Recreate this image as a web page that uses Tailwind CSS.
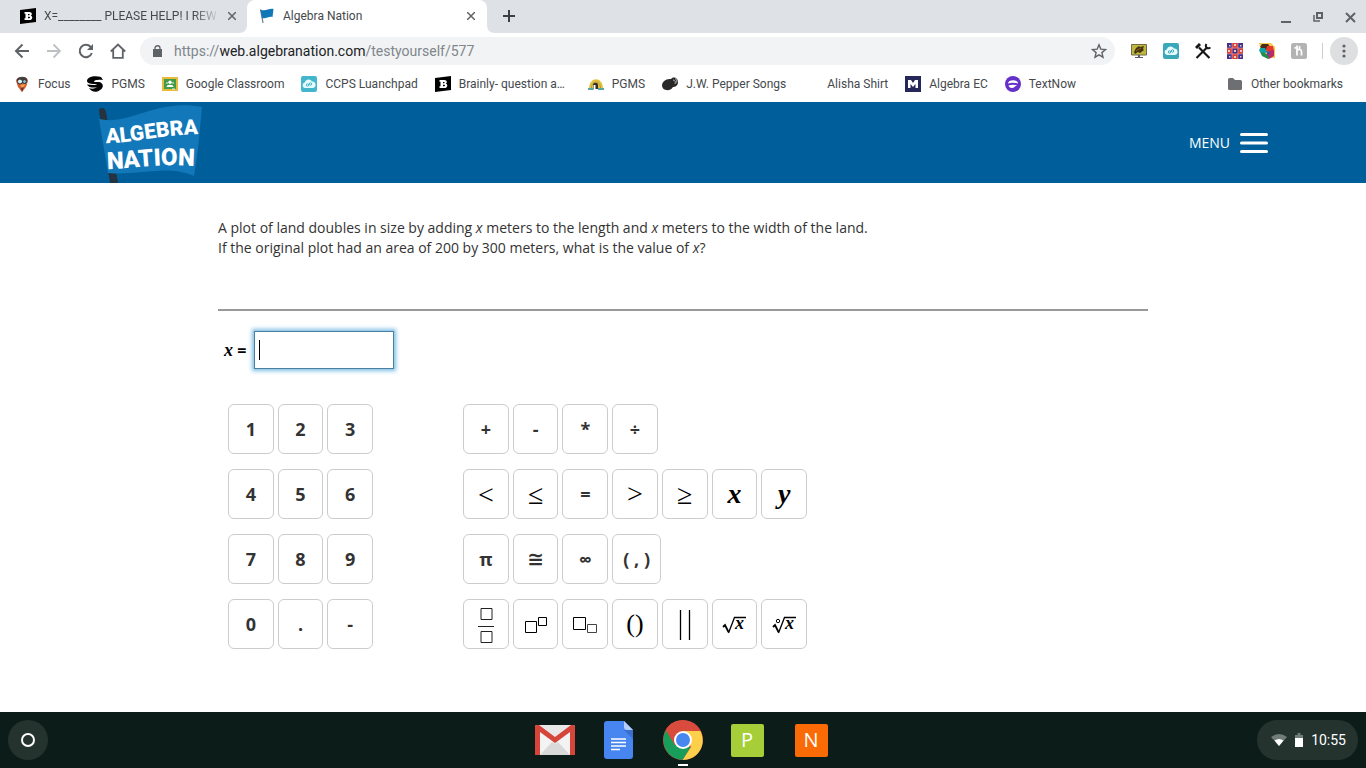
<!doctype html>
<html lang="en">
<head>
  <meta charset="UTF-8">
  <meta name="viewport" content="width=device-width, initial-scale=1.0">
  <title>Algebra Nation</title>
  <script src="https://cdn.jsdelivr.net/npm/@tailwindcss/browser@4"></script>
</head>
<body class="flex min-h-screen flex-col bg-white font-['Roboto',sans-serif] text-xs text-[#45494d]">

  <!-- Tab strip -->
  <div class="flex h-[33px] bg-[#dee1e6]">
    <div class="flex w-60 items-center gap-1 pb-[2px] pl-5">
      <svg class="mr-1 size-4 shrink-0" viewBox="0 0 16 16"><path d="M0 2 16 0v14L0 16z" fill="#000"/><path d="M4.500 4h4.700c3.200 0 3.200 3 1.600 3.700 2.300.6 2 4.300-1.400 4.300H4.500v-1.800h1V5.800h-1zM8 6v1.300h1C10 7.300 10 6 9 6zm0 2.800v1.500h1.200c1.100 0 1.100-1.500 0-1.500z" fill="#fff"/></svg>
      <a href="#" class="min-w-0 flex-1 overflow-hidden whitespace-nowrap mask-r-from-85%">X=________ PLEASE HELP! I REW</a>
      <button aria-label="Close tab" class="flex size-4 items-center justify-center"><svg class="size-2" viewBox="0 0 8 8" stroke="#5f6368" stroke-width="1.500"><path d="m0 0 8 8M8 0 0 8"/></svg></button>
    </div>
    <svg class="-ml-px size-2 self-end" viewBox="0 0 8 8"><path d="M8 0v8H0c5 0 8-3 8-8" fill="#fff"/></svg>
    <div class="flex w-60 items-center gap-2 rounded-t-lg bg-white pr-2 pb-[2px] pl-3">
      <svg class="size-4 shrink-0" viewBox="0 0 16 16"><path d="M1.500 1.500 4 15" stroke="#6a7a86" stroke-width="1.200"/><path d="M1.500 1.500c5 2.500 8-1.500 13-.5l-1 8c-4-1-6 2-10.500 1z" fill="#1277b8"/></svg>
      <a href="#" class="flex-1">Algebra Nation</a>
      <button aria-label="Close tab" class="flex size-4 items-center justify-center"><svg class="size-2" viewBox="0 0 8 8" stroke="#5f6368" stroke-width="1.500"><path d="m0 0 8 8M8 0 0 8"/></svg></button>
    </div>
    <svg class="size-2 self-end" viewBox="0 0 8 8"><path d="M0 0v8h8C3 8 0 5 0 0" fill="#fff"/></svg>
    <button aria-label="New tab" class="flex w-7 items-center justify-center pb-[2px]"><svg class="size-3" viewBox="0 0 12 12" stroke="#3c4043" stroke-width="2"><path d="M6 0v12M0 6h12"/></svg></button>
    <div class="ml-auto flex items-center gap-4 pr-2">
      <button aria-label="Minimize" class="size-4"><svg viewBox="0 0 16 16"><path d="M3 12h10v2H3z" fill="#5f6368"/></svg></button>
      <button aria-label="Restore" class="size-4"><svg viewBox="0 0 16 16" fill="none" stroke="#5f6368" stroke-width="2"><path d="M7 4h5v5H7z"/><path d="M4 6v6h6" stroke-width="1.500"/></svg></button>
      <button aria-label="Close" class="size-4"><svg viewBox="0 0 16 16" stroke="#5f6368" stroke-width="2"><path d="m4 4 9 9M13 4l-9 9"/></svg></button>
    </div>
  </div>

  <!-- Toolbar -->
  <div class="flex h-9 items-center pr-2 pl-[6px]">
    <button aria-label="Back" class="flex w-8 justify-center"><svg class="size-4" viewBox="0 0 16 16" fill="none" stroke="#5f6368" stroke-width="2"><path d="M15 8H2.500M8.500 1.500 2 8l6.500 6.500"/></svg></button>
    <button aria-label="Forward" class="flex w-8 justify-center"><svg class="size-4" viewBox="0 0 16 16" fill="none" stroke="#bdc1c6" stroke-width="1.800"><path d="M1 8h12.500M7.500 1.500 14 8l-6.500 6.500"/></svg></button>
    <button aria-label="Reload" class="flex w-8 justify-center"><svg class="size-4" viewBox="0 0 16 16" fill="none" stroke="#5f6368" stroke-width="2"><path d="M13.800 10A6.200 6.200 0 1 1 12.500 3.700L14 5.300"/><path d="M15 1v6H9z" fill="#5f6368" stroke="none"/></svg></button>
    <button aria-label="Home" class="flex w-8 justify-center"><svg class="size-4" viewBox="0 0 16 16" fill="none" stroke="#5f6368" stroke-width="1.800"><path d="M.8 8.500 8 1.500l7.200 7M3.200 7v7.800h9.600V7"/></svg></button>
    <div class="ml-[6px] flex h-7 flex-1 items-center rounded-full bg-[#f1f3f4] pr-2 pl-[13px]">
      <svg class="mr-3 h-3 w-[9px]" viewBox="0 0 9 12"><path d="M0 4h9v8H0z" fill="#5f6368"/><path d="M2 5V3c0-3 5-3 5 0v2" fill="none" stroke="#5f6368" stroke-width="1.300"/></svg>
      <a href="#" class="flex-1 text-sm text-[#80868b]">https://<span class="text-[#202124]">web.algebranation.com</span>/testyourself/577</a>
      <button aria-label="Bookmark this page"><svg class="size-4" viewBox="0 0 16 16" fill="none" stroke="#5f6368" stroke-width="1.400"><path d="m8 1.800 1.800 4.300 4.700.4-3.600 3.100 1.100 4.600L8 11.800l-4 2.400 1.100-4.600L1.500 6.500l4.700-.4z"/></svg></button>
    </div>
    <div class="flex pl-2">
      <button aria-label="Desktop extension" class="flex w-8 justify-center"><svg class="size-4" viewBox="0 0 16 16"><path d="M.5 1.500h15V12H.5z" fill="#c3b63f" stroke="#6f6c4a"/><path d="m3 9 2-4 3-2 1 1 4-1-1 3 1 1-4 3-2-1-3 2z" fill="#3b3911"/><path d="m5 8 5-3" stroke="#b84c1b"/><path d="M7 12h2v2h3v1H4v-1h3z" fill="#5b5d6b"/></svg></button>
      <button aria-label="Launchpad extension" class="flex w-8 justify-center"><svg class="size-4" viewBox="0 0 16 16"><rect width="16" height="16" rx="2" fill="#39a9b9"/><path d="M4 12a2.800 2.800 0 0 1-.3-5.500A4 4 0 0 1 11 5.500 3.300 3.300 0 0 1 12 12z" fill="#e7fbff"/><circle cx="6.500" cy="9" r="1.200" fill="none" stroke="#39a9b9"/><circle cx="9.500" cy="8" r="1.200" fill="none" stroke="#39a9b9"/></svg></button>
      <button aria-label="Tools extension" class="flex w-8 justify-center"><svg class="size-4" viewBox="0 0 16 16" fill="none" stroke="#181818"><path d="M4 4.500 14.500 15" stroke-width="2.200"/><path d="m1.500 15 10-10" stroke-width="2.200"/><path d="m1 5 4-4" stroke-width="3"/><path d="M11.500 1c-2 3 1 5.500 4 3.500" stroke-width="2"/></svg></button>
      <button aria-label="Pattern extension" class="flex w-8 justify-center"><svg class="size-4" viewBox="0 0 16 16"><path d="M0 0h16v16H0z" fill="#d84338"/><path d="M0 0h5v5H0zM11 0h5v5h-5zM5.500 5.500h5v5h-5zM0 11h5v5H0zM11 11h5v5h-5z" fill="#40318f"/><path d="M2 2h1.500v1.500H2zM7 1h2v2H7zM13 2h1.500v1.500H13zM1 7h2v2H1zM7 7h2v2H7zM13 7h2v2h-2zM2 13h1.500v1.500H2zM7 13h2v2H7zM13 13h1.500v1.500H13z" fill="#e9c9c5"/><path d="M5 0v16M11 0v16M0 5h16M0 11h16" stroke="#d9b4c4" stroke-width=".5"/></svg></button>
      <button aria-label="Paint extension" class="flex w-8 justify-center"><svg class="size-4" viewBox="0 0 16 16"><path d="M0 0h12l4 4v11h-3L3 12z" fill="#f8c94b"/><path d="M3 1h6l3 4-6 3-5-4z" fill="#4a2b1b"/><path d="M1 5h5l2 4-4 2-4-3z" fill="#11a2a8"/><path d="M8 3h6l1 5-4 3-4-4z" fill="#e6372b"/><path d="m10 8 5-1v6l-5 3-4-3z" fill="#b82d68"/><path d="m1 9 5 1 4 4-1 2-6-3z" fill="#218f49"/><path d="m7 8 4 1-2 4z" fill="#2d58bd"/></svg></button>
      <button aria-label="Honey extension" class="flex w-8 justify-center"><svg class="size-4" viewBox="0 0 16 16" fill="none"><rect width="16" height="16" rx="2.500" fill="#b3b3b3"/><path d="M6 2.500v10M6 7.500c1-1.500 4.500-1.500 4.500 1v4M3.500 4.500 6 5.500M8.500 3v3" stroke="#fff" stroke-width="1.700"/></svg></button>
    </div>
    <div class="mx-[7px] h-4 w-px bg-[#c9ccd0]"></div>
    <button aria-label="Browser menu" class="flex size-7 items-center justify-center rounded-full bg-[#dedfe0]"><svg class="size-4" viewBox="0 0 16 16" fill="#5f6368"><circle cx="8" cy="3" r="1.600"/><circle cx="8" cy="8" r="1.600"/><circle cx="8" cy="13" r="1.600"/></svg></button>
  </div>

  <!-- Bookmarks bar -->
  <nav class="flex h-[33px] items-center gap-[17px] pr-[23px] pb-[3px] pl-[14px] whitespace-nowrap">
    <a href="#" class="flex items-center gap-2"><svg class="size-4" viewBox="0 0 16 16"><path d="M2 5c0-5 12-5 12 0l-2 6-4 5-4-5z" fill="#d45b32"/><path d="M3 3c2-3 9-3 10 0v2H3z" fill="#493f3b"/><circle cx="6" cy="5.500" r="2.500" fill="#def1f2" stroke="#283238"/><circle cx="10.500" cy="5.500" r="2" fill="#83bac4" stroke="#283238"/><path d="m6 9 5-1-2 5z" fill="#f4a046"/><path d="m7 12 3-1-2 5z" fill="#5b302c"/></svg>Focus</a>
    <a href="#" class="flex items-center gap-2"><svg class="size-4" viewBox="0 0 16 16"><path d="M14 1C7-1 0 1 0 5c0 2.500 4 3 10 3-1 1.500-6 1-10 .5 1 2 3 3 5 3h8.500c2.500-2.500 1.500-5-1.500-5.500H7C7 4 10 3.500 16 4z" fill="#050505"/><path d="M2 12c2 1 6 1 8-1l4-4c3 2 2 5-1 7-3 3-9 2-11-2" fill="#050505"/></svg>PGMS</a>
    <a href="#" class="flex items-center gap-2"><svg class="size-4" viewBox="0 0 16 16"><path d="M0 1h16v14H0z" fill="#e9ba3c"/><path d="M2 3h12v10H2z" fill="#439a4a"/><circle cx="8" cy="6.300" r="1.700" fill="#fff"/><path d="M4.500 11c0-3 7-3 7 0z" fill="#fff"/><circle cx="5" cy="7" r="1" fill="#b5d9ad"/><circle cx="11" cy="7" r="1" fill="#b5d9ad"/><path d="M10 12.500h3v1h-3z" fill="#eee"/></svg>Google Classroom</a>
    <a href="#" class="flex items-center gap-2"><svg class="size-4" viewBox="0 0 16 16"><rect width="16" height="16" rx="2" fill="#43b6cb"/><path d="M4 12a2.800 2.800 0 0 1-.3-5.500A4 4 0 0 1 11 5.500 3.300 3.300 0 0 1 12 12z" fill="#e7fbff"/><circle cx="6.500" cy="9" r="1.200" fill="none" stroke="#43b6cb"/><circle cx="9.500" cy="8" r="1.200" fill="none" stroke="#43b6cb"/></svg>CCPS Luanchpad</a>
    <a href="#" class="flex items-center gap-2"><svg class="size-4" viewBox="0 0 16 16"><path d="M0 2 16 0v14L0 16z" fill="#000"/><path d="M4.500 4h4.700c3.200 0 3.200 3 1.600 3.700 2.300.6 2 4.300-1.400 4.300H4.500v-1.800h1V5.800h-1zM8 6v1.300h1C10 7.300 10 6 9 6zm0 2.800v1.500h1.200c1.100 0 1.100-1.500 0-1.500z" fill="#fff"/></svg>Brainly- question a…</a>
    <a href="#" class="ml-[6px] flex items-center gap-2"><svg class="size-4" viewBox="0 0 16 16"><path d="M1 13C1 0 15 0 15 13" fill="#e3c13d"/><path d="M3.500 12C3.500 4 12.500 4 12.500 12" fill="none" stroke="#b39b3f"/><path d="M5 13V9c0-3 5-3 5 0v4z" fill="#342e29"/><path d="M5.500 9h2v4h-2z" fill="#fff"/><path d="M0 12h5l1 2H0zM10 12h6v2h-6z" fill="#58a7a7"/></svg>PGMS</a>
    <a href="#" class="flex items-center gap-2"><svg class="size-4" viewBox="0 0 16 16"><path d="M0 9c1-5 5-6 9-6 3-3 7-1 7 3s-3 5-5 5c-3 5-11 4-11-2" fill="#292929"/><path d="M11 4c2 0 3 2 2 4M13 2.500c2 1 2 2 1.500 4" stroke="#d8d8d8" fill="none" stroke-width=".8"/></svg>J.W. Pepper Songs</a>
    <a href="#" class="flex items-center gap-2"><span class="size-4"></span>Alisha Shirt</a>
    <a href="#" class="flex items-center gap-2"><svg class="size-4" viewBox="0 0 16 16"><path d="M0 0h16v16H0z" fill="#252859"/><path d="M3 12V4h3l2 3 2-3h3v8h-2.500V8L8 11 5.500 8v4z" fill="#fff"/></svg>Algebra EC</a>
    <a href="#" class="flex items-center gap-2"><svg class="size-4" viewBox="0 0 16 16"><circle cx="8" cy="8" r="8" fill="#6530c9"/><path d="M3 7.500c0-4.500 10-4.500 10 0-3-1-7-1-10 0" fill="#fff"/><path d="M3.500 9.500c3-1 6-1 9 0-2 0-3 2-5 2.500-2 .5-3.500-1-4-2.500" fill="#fff"/></svg>TextNow</a>
    <a href="#" class="ml-auto flex items-center gap-2"><svg class="size-4" viewBox="0 0 16 16"><path d="M1 3.500Q1 2 2.500 2H6l2 2h5.500Q15 4 15 5.500v7q0 1.500-1.500 1.500h-11Q1 14 1 12.500z" fill="#6d6f72"/></svg>Other bookmarks</a>
  </nav>

  <!-- Site header -->
  <header class="bg-[#005f9b] px-4 font-['Open_Sans',sans-serif]">
    <div class="mx-auto flex h-[81px] max-w-[1170px] items-center justify-between">
      <a href="#" aria-label="Algebra Nation home">
        <svg class="h-[81px] w-[106px]" viewBox="0 0 106 81" font-family="Roboto, sans-serif" font-weight="900" fill="#fff">
          <path d="M1 9Q1 6 4 6t4 4l12 71h-8z" fill="#26323d"/>
          <path d="M1 17C32 24 58-4 104 5c-2 22-4 46-8 69C68 62 42 74 10 71z" fill="#1278b9"/>
          <path id="line-top" d="M8 41C38 41 62 32 110 32" fill="none"/>
          <path id="line-bottom" d="M9 67C38 67 58 60 110 65" fill="none"/>
          <text font-size="21"><textPath href="#line-top">ALGEBRA</textPath></text>
          <text font-size="24"><textPath href="#line-bottom">NATION</textPath></text>
        </svg>
      </a>
      <button class="flex items-center gap-[10px] text-sm text-white">MENU
        <svg class="h-5 w-7" viewBox="0 0 28 20" stroke="#fff" stroke-width="3" stroke-linecap="round"><path d="M1.500 1.500h25M1.500 10h25M1.500 18.500h25"/></svg>
      </button>
    </div>
  </header>

  <!-- Question -->
  <main class="mx-auto w-full max-w-[930px] flex-1 font-['Open_Sans',sans-serif] text-sm text-[#333]">
    <div class="border-b-2 border-[#999] pt-[35px] pb-[51px] leading-5">
      <p>A plot of land doubles in size by adding <i>x</i> meters to the length and <i>x</i> meters to the width of the land.<br>If the original plot had an area of 200 by 300 meters, what is the value of <i>x</i>?</p>
    </div>

    <div class="mt-5 flex items-center gap-2 pl-[6px]">
      <label for="answer" class="text-base font-bold text-black"><i class="font-['Liberation_Serif',serif] text-lg leading-6">x</i> =</label>
      <div class="relative">
        <input id="answer" type="text" class="block h-[38px] w-[140px] border border-[#4a7f9f] px-1 caret-transparent shadow-[0_0_4px_2px_#7fbfe6] outline-none">
        <span class="absolute top-[9px] left-[5px] h-5 w-px bg-black"></span>
      </div>
    </div>

    <div class="mt-[35px] flex gap-[90px] pl-[10px] text-lg font-bold">
      <div class="grid w-[145px] grid-cols-3 gap-x-1 gap-y-[15px]">
        <button class="h-[50px] rounded-md border border-[#ccc]">1</button>
        <button class="h-[50px] rounded-md border border-[#ccc]">2</button>
        <button class="h-[50px] rounded-md border border-[#ccc]">3</button>
        <button class="h-[50px] rounded-md border border-[#ccc]">4</button>
        <button class="h-[50px] rounded-md border border-[#ccc]">5</button>
        <button class="h-[50px] rounded-md border border-[#ccc]">6</button>
        <button class="h-[50px] rounded-md border border-[#ccc]">7</button>
        <button class="h-[50px] rounded-md border border-[#ccc]">8</button>
        <button class="h-[50px] rounded-md border border-[#ccc]">9</button>
        <button class="h-[50px] rounded-md border border-[#ccc]">0</button>
        <button class="h-[50px] rounded-md border border-[#ccc]">.</button>
        <button class="h-[50px] rounded-md border border-[#ccc]">-</button>
      </div>

      <div class="grid w-[344px] grid-cols-7 gap-x-1 gap-y-[15px]">
        <button class="h-[50px] rounded-md border border-[#ccc]">+</button>
        <button class="h-[50px] rounded-md border border-[#ccc]">-</button>
        <button class="h-[50px] rounded-md border border-[#ccc]">*</button>
        <button class="h-[50px] rounded-md border border-[#ccc]">÷</button>

        <button class="col-start-1 h-[50px] rounded-md border border-[#ccc] pt-px font-['Liberation_Serif',serif] text-[28px] font-normal text-black">&lt;</button>
        <button class="h-[50px] rounded-md border border-[#ccc] pt-px font-['Liberation_Serif',serif] text-[28px] font-normal text-black">≤</button>
        <button class="h-[50px] rounded-md border border-[#ccc]">=</button>
        <button class="h-[50px] rounded-md border border-[#ccc] font-['Liberation_Serif',serif] text-[28px] font-normal text-black">&gt;</button>
        <button class="h-[50px] rounded-md border border-[#ccc] pt-px font-['Liberation_Serif',serif] text-[28px] font-normal text-black">≥</button>
        <button class="h-[50px] rounded-md border border-[#ccc] font-['Liberation_Serif',serif] text-[28px] text-black italic">x</button>
        <button class="h-[50px] rounded-md border border-[#ccc] font-['Liberation_Serif',serif] text-[28px] text-black italic">y</button>

        <button class="h-[50px] rounded-md border border-[#ccc]">π</button>
        <button class="h-[50px] rounded-md border border-[#ccc] font-['DejaVu_Sans',sans-serif] text-xl">≅</button>
        <button class="h-[50px] rounded-md border border-[#ccc]">∞</button>
        <button class="h-[50px] w-[49px] rounded-md border border-[#ccc]">( , )</button>

        <button aria-label="Fraction" class="col-start-1 flex h-[50px] items-center justify-center rounded-md border border-[#ccc] pt-[2px]"><svg class="h-9 w-4" viewBox="0 0 16 36" fill="none" stroke="#222"><path d="M3 1.500h11v11H3zM0 19.500h16M3 24.500h11v11H3z"/></svg></button>
        <button aria-label="Exponent" class="flex h-[50px] items-center justify-center rounded-md border border-[#ccc] pt-[2px]"><svg class="h-5 w-6" viewBox="0 0 24 20" fill="none" stroke="#000"><path d="M1.500 6.500h11v11h-11zM14.500 2.500h8v8h-8z"/></svg></button>
        <button aria-label="Subscript" class="flex h-[50px] items-center justify-center rounded-md border border-[#ccc] pt-[2px]"><svg class="h-5 w-6" viewBox="0 0 24 20" fill="none" stroke="#000"><path d="M.5 2.500h12v12H.5z"/><path d="M14.500 9.500h9v8h-9z" stroke="#444"/></svg></button>
        <button class="h-[50px] rounded-md border border-[#ccc] font-['Liberation_Serif',serif] text-[26px] font-normal text-black">()</button>
        <button aria-label="Absolute value" class="flex h-[50px] items-center justify-center rounded-md border border-[#ccc] pt-[2px]"><svg class="h-[30px] w-3" viewBox="0 0 12 30" stroke="#000" stroke-width="1.300"><path d="M1.500 0v30M10.500 0v30"/></svg></button>
        <button aria-label="Square root" class="flex h-[50px] items-center justify-center rounded-md border border-[#ccc] pt-[2px]"><svg class="h-6 w-6" viewBox="0 0 24 24" fill="none" stroke="#000"><path d="m1 14 2-2 3.500 7" stroke-width="1.800"/><path d="m6.500 20 6-15.500H24" stroke-width="1.300"/><text x="13" y="16" font-family="Liberation Serif, serif" font-size="18" font-style="italic" font-weight="bold" fill="#000" stroke="none">x</text></svg></button>
        <button aria-label="Nth root" class="flex h-[50px] items-center justify-center rounded-md border border-[#ccc] pt-[2px]"><svg class="h-6 w-6" viewBox="0 0 24 24" fill="none" stroke="#000"><path d="m1 14 2-2 3.500 7" stroke-width="1.800"/><path d="m6.500 20 6-15.500H24" stroke-width="1.300"/><circle cx="6" cy="8" r="1.700"/><text x="13" y="16" font-family="Liberation Serif, serif" font-size="18" font-style="italic" font-weight="bold" fill="#000" stroke="none">x</text></svg></button>
      </div>
    </div>
  </main>

  <!-- Shelf -->
  <footer class="grid h-14 grid-cols-[1fr_auto_1fr] items-center bg-[#0b1c19] px-2">
    <button aria-label="Launcher" class="flex size-10 items-center justify-center rounded-full bg-[#25332f]"><svg class="size-4" viewBox="0 0 16 16"><circle cx="8" cy="8" r="6" fill="none" stroke="#fff" stroke-width="2"/></svg></button>
    <div class="flex gap-6">
      <a href="#" aria-label="Gmail"><svg class="size-10" viewBox="0 0 40 40"><rect y="5" width="40" height="30" rx="2" fill="#e8e8e8"/><path d="m5 12 15 12 15-12v23H5z" fill="#f3f3f3"/><path d="m5 35 12-13 3 2 3-2 12 13z" fill="#d9d9d9"/><path d="M0 7q0-2 2-2h2l16 12L36 5h2q2 0 2 2v28h-5V12L20 23 5 12v23H0z" fill="#d5453a"/></svg></a>
      <a href="#" aria-label="Docs"><svg class="size-10" viewBox="0 0 40 40"><path d="M8 1h17l9 9v26q0 3-3 3H8q-3 0-3-3V4q0-3 3-3" fill="#4786f1"/><path d="M25 1v6q0 3 3 3h6z" fill="#b4cdf9"/><path d="M25 10h9v9z" fill="#3a6fce"/><path d="M12 19h15M12 22.500h15M12 26h15M12 29.500h9" stroke="#fff" stroke-width="1.600"/></svg></a>
      <a href="#" aria-label="Chrome" class="relative"><svg class="size-10" viewBox="0 0 40 40"><circle cx="20" cy="20" r="20" fill="#d94b3c"/><path d="M37.300 11H20l8 16-8.500 13C36 40 44 24 37.300 11" fill="#fcd04b"/><path d="M3 10C-4 23 4 39 19.500 40l8-13L12 25z" fill="#189d5b"/><path d="M2.700 10 12 25l8-14h17.300C30-3 10-3 2.700 10" fill="#d94b3c"/><circle cx="20" cy="20" r="9" fill="#fff"/><circle cx="20" cy="20" r="7" fill="#4887ef"/></svg><span class="absolute -bottom-[6px] left-[15px] h-[2px] w-[10px] bg-white"></span></a>
      <a href="#" class="flex size-10 items-center justify-center"><span class="flex size-[33px] items-center justify-center rounded-xs bg-[#a6ce39] font-['Open_Sans',sans-serif] text-xl text-white">P</span></a>
      <a href="#" class="flex size-10 items-center justify-center"><span class="flex size-[33px] items-center justify-center rounded-xs bg-[#fa6b05] font-['Open_Sans',sans-serif] text-xl text-white">N</span></a>
    </div>
    <button class="flex h-10 items-center gap-2 justify-self-end rounded-full bg-[#25332f] pr-3 pl-[14px] text-sm text-white">
      <svg class="size-4" viewBox="0 0 16 16"><path d="M0 5q8-6 16 0L8 14z" fill="#717b78"/><path d="M3.500 8.500q4.500-3 9 0L8 14z" fill="#fff"/></svg>
      <svg class="h-[14px] w-2" viewBox="0 0 8 14"><path d="M2.500 0h3v2H8v4H0V2h2.500z" fill="#717b78"/><path d="M0 5h8v9H0z" fill="#fff"/></svg>
      <span>10:55</span>
    </button>
  </footer>
</body>
</html>
